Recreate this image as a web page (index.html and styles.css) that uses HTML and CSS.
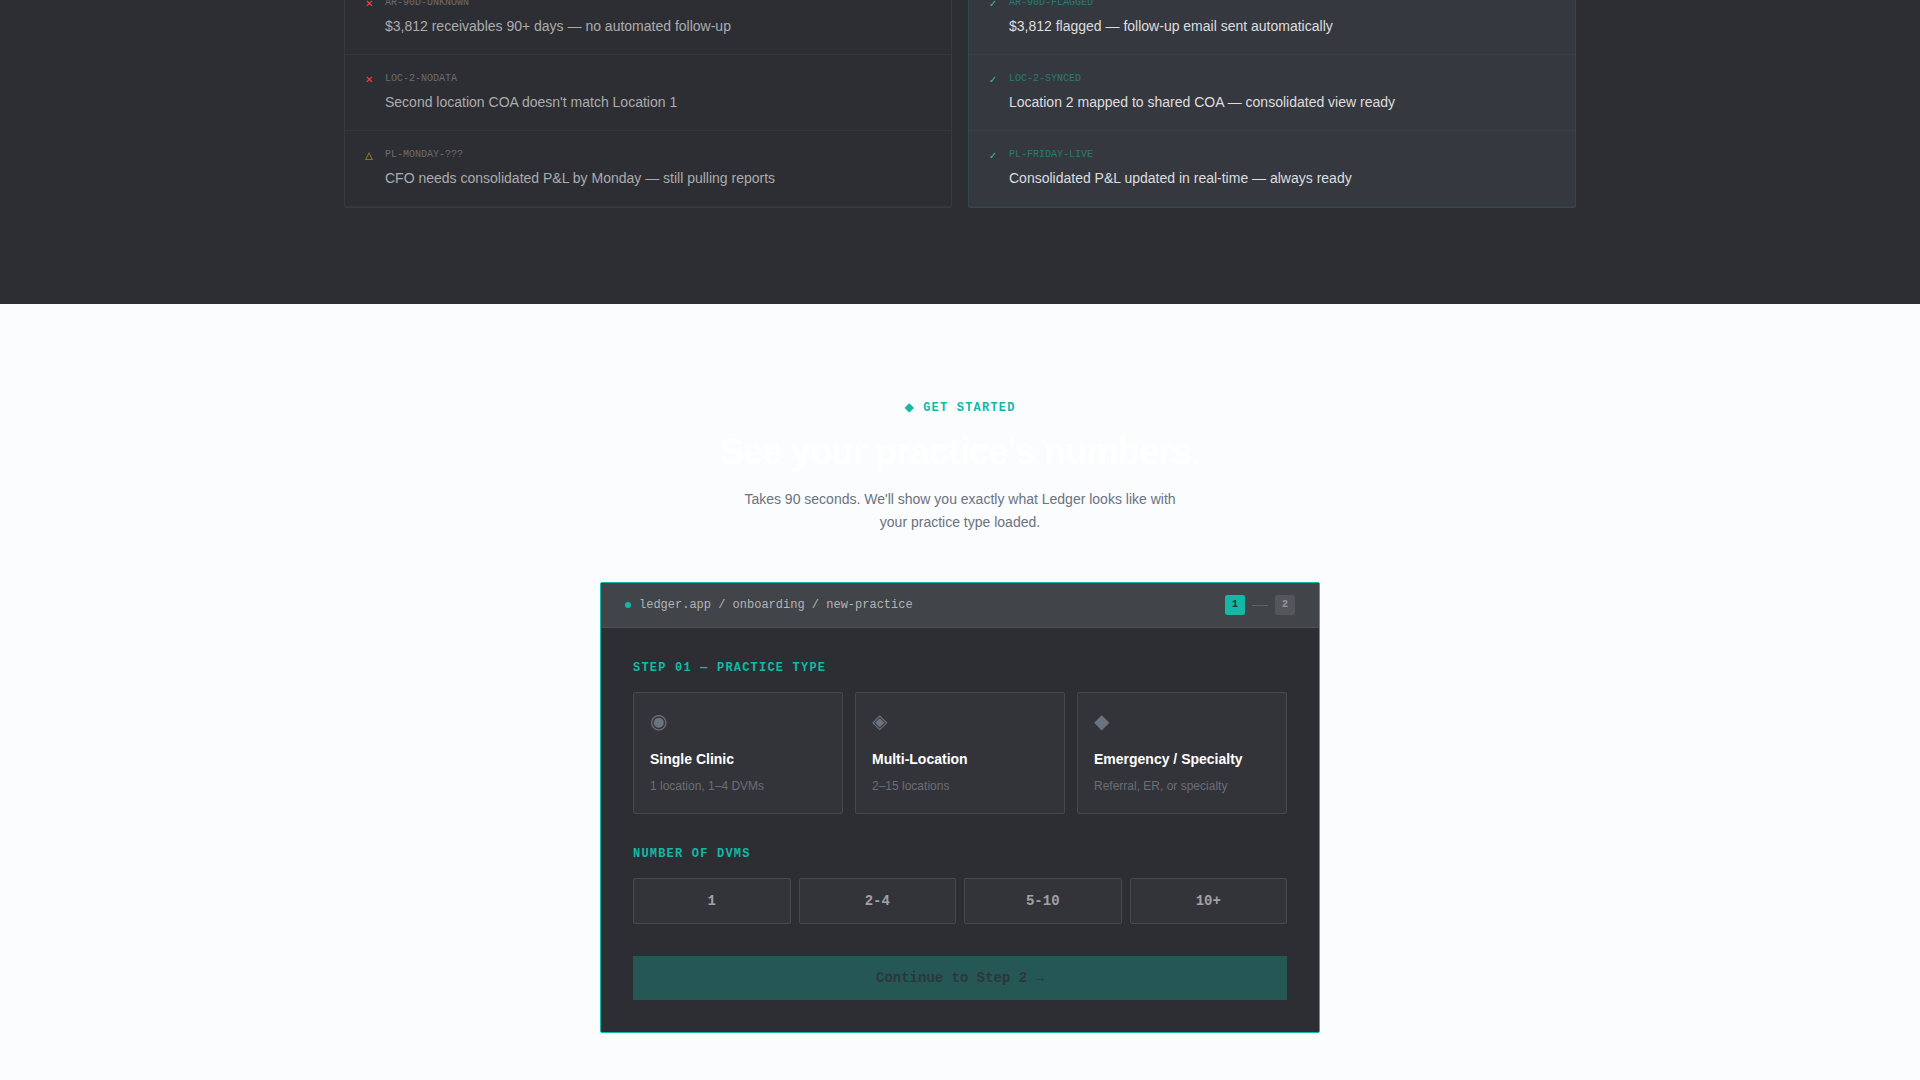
FILE: index.html
```html
<!DOCTYPE html>
<html lang="en">
<head>
  <meta charset="UTF-8">
  <meta name="viewport" content="width=device-width, initial-scale=1.0">
  <title>Ledger</title>
  <link rel="stylesheet" href="styles.css">
</head>
<body>
  <!-- Before / after comparison -->
  <section class="compare">
    <div class="compare-grid">
      <ul class="panel panel-before">
        <li class="row">
          <span class="row-icon">✕</span>
          <div>
            <div class="row-code">AR-90D-UNKNOWN</div>
            <div class="row-text">$3,812 receivables 90+ days — no automated follow-up</div>
          </div>
        </li>
        <li class="row">
          <span class="row-icon">✕</span>
          <div>
            <div class="row-code">LOC-2-NODATA</div>
            <div class="row-text">Second location COA doesn't match Location 1</div>
          </div>
        </li>
        <li class="row">
          <span class="row-icon warn">△</span>
          <div>
            <div class="row-code">PL-MONDAY-???</div>
            <div class="row-text">CFO needs consolidated P&amp;L by Monday — still pulling reports</div>
          </div>
        </li>
      </ul>
      <ul class="panel panel-after">
        <li class="row">
          <span class="row-icon">✓</span>
          <div>
            <div class="row-code">AR-90D-FLAGGED</div>
            <div class="row-text">$3,812 flagged — follow-up email sent automatically</div>
          </div>
        </li>
        <li class="row">
          <span class="row-icon">✓</span>
          <div>
            <div class="row-code">LOC-2-SYNCED</div>
            <div class="row-text">Location 2 mapped to shared COA — consolidated view ready</div>
          </div>
        </li>
        <li class="row">
          <span class="row-icon">✓</span>
          <div>
            <div class="row-code">PL-FRIDAY-LIVE</div>
            <div class="row-text">Consolidated P&amp;L updated in real-time — always ready</div>
          </div>
        </li>
      </ul>
    </div>
  </section>

  <!-- Onboarding -->
  <section class="start">
    <div class="eyebrow">◆ GET STARTED</div>
    <h2 class="start-title">See your practice's numbers.</h2>
    <p class="start-text">Takes 90 seconds. We'll show you exactly what Ledger looks like with your practice type loaded.</p>

    <form class="wizard">
      <div class="wizard-bar">
        <span class="dot"></span>
        <span class="path">ledger.app / onboarding / new-practice</span>
        <div class="steps">
          <span class="step active">1</span>
          <span class="step-line"></span>
          <span class="step">2</span>
        </div>
      </div>
      <div class="wizard-body">
        <h3 class="label">STEP 01 — PRACTICE TYPE</h3>
        <div class="types">
          <button type="button" class="type">
            <span class="type-icon">◉</span>
            <span class="type-name">Single Clinic</span>
            <span class="type-info">1 location, 1–4 DVMs</span>
          </button>
          <button type="button" class="type">
            <span class="type-icon">◈</span>
            <span class="type-name">Multi-Location</span>
            <span class="type-info">2–15 locations</span>
          </button>
          <button type="button" class="type">
            <span class="type-icon">◆</span>
            <span class="type-name">Emergency / Specialty</span>
            <span class="type-info">Referral, ER, or specialty</span>
          </button>
        </div>
        <h3 class="label">NUMBER OF DVMS</h3>
        <div class="counts">
          <button type="button" class="count">1</button>
          <button type="button" class="count">2-4</button>
          <button type="button" class="count">5-10</button>
          <button type="button" class="count">10+</button>
        </div>
        <button type="submit" class="continue" disabled>Continue to Step 2 →</button>
      </div>
    </form>
  </section>
</body>
</html>
```
FILE: styles.css
```css
* {
  box-sizing: border-box;
}
body {
  margin: 0;
  font-family: "Liberation Sans", Arial, sans-serif;
  background-color: #fafcfe;
}
h2, h3, p, ul {
  margin: 0;
  padding: 0;
}
button {
  font-family: inherit;
  cursor: pointer;
}

/* Comparison */
.compare {
  padding: 0 24px 96px;
  background-color: #2d2e33;
  overflow: hidden;
}
.compare-grid {
  display: grid;
  grid-template-columns: 1fr 1fr;
  gap: 16px;
  max-width: 1232px;
  margin: -22px auto 0; /* panels run up past the top edge */
}
.panel {
  list-style: none;
  border: 1px solid #38393e;
  border-radius: 2px;
}
.row {
  display: flex;
  gap: 12px;
  padding: 16px 20px;
  border-bottom: 1px solid #35363b;
}
.row-icon {
  width: 8px;
  font: 10px/18px "DejaVu Sans", sans-serif;
  color: #ef4444;
}
.row-icon.warn {
  color: #d19a12;
}
.row-code {
  margin-bottom: 4px;
  font: 10px/16px "Liberation Mono", monospace;
  color: #6b6c71;
}
.row-text {
  font-size: 14px;
  line-height: 23px;
  color: #abacae;
}
.panel-after {
  background-color: #363840;
  border-color: #2f4a4d;
}
.panel-after .row {
  border-bottom-color: #393e45;
}
.panel-after .row-icon {
  color: #2fc496;
}
.panel-after .row-code {
  color: #287c73;
}
.panel-after .row-text {
  color: #dededf;
}

/* Get started */
.start {
  padding: 96px 24px 40px;
}
.eyebrow,
.label {
  font: bold 12px/16px "Liberation Mono", "DejaVu Sans", monospace;
  letter-spacing: 0.1em;
  color: #14b8a6;
}
.eyebrow {
  text-align: center;
}
.start-title {
  margin: 16px 0;
  font-size: 36px;
  line-height: 40px;
  letter-spacing: -0.02em;
  text-align: center;
  color: #fff;
}
.start-text {
  max-width: 440px;
  margin: 0 auto 48px;
  font-size: 14px;
  line-height: 23px;
  text-align: center;
  color: #6b7280;
}

/* Wizard */
.wizard {
  max-width: 720px;
  margin: 0 auto;
  background-color: #2d2e33;
  border: 1px solid #14b8a6;
  border-radius: 2px;
}
.wizard-bar {
  display: flex;
  align-items: center;
  gap: 8px;
  padding: 12px 24px;
  background-color: #414448;
  border-bottom: 1px solid #4d4f54;
}
.dot {
  width: 6px;
  height: 6px;
  border-radius: 50%;
  background-color: #14b8a6;
}
.path {
  font: 12px/16px "Liberation Mono", monospace;
  color: #b3b4b6;
}
.steps {
  display: flex;
  align-items: center;
  gap: 7px;
  margin-left: auto;
}
.step {
  width: 20px;
  border-radius: 2px;
  font: bold 10px/20px "Liberation Mono", monospace;
  text-align: center;
  background-color: #54565c;
  color: #96979b;
}
.step.active {
  background-color: #14b8a6;
  color: #2d2e33;
}
.step-line {
  width: 16px;
  height: 1px;
  background-color: #606267;
}
.wizard-body {
  padding: 32px;
}
.label {
  margin-bottom: 16px;
}
.types {
  display: grid;
  grid-template-columns: repeat(3, 1fr);
  gap: 12px;
  margin-bottom: 32px;
}
.type {
  display: flex;
  flex-direction: column;
  padding: 16px;
  text-align: left;
  background-color: #333439;
  border: 1px solid #47484d;
  border-radius: 2px;
}
.type-icon {
  margin-bottom: 16px;
  font-size: 20px;
  line-height: 24px;
  color: #6b7280;
}
.type-name {
  margin-bottom: 8px;
  font-size: 14px;
  font-weight: bold;
  line-height: 20px;
  color: #fff;
}
.type-info {
  padding-bottom: 2px;
  font-size: 12px;
  line-height: 18px;
  color: #6b6d77;
}
.counts {
  display: grid;
  grid-template-columns: repeat(4, 1fr);
  gap: 8px;
  margin-bottom: 32px;
}
.count {
  padding: 12px;
  font: bold 14px/20px "Liberation Mono", monospace;
  color: #a0a1a4;
  background-color: #333439;
  border: 1px solid #47484d;
  border-radius: 2px;
}
.continue {
  width: 100%;
  padding: 12px;
  font: bold 14px/20px "Liberation Mono", monospace;
  color: #2d363c;
  background-color: #255754;
  border: none;
  cursor: default;
}
```
